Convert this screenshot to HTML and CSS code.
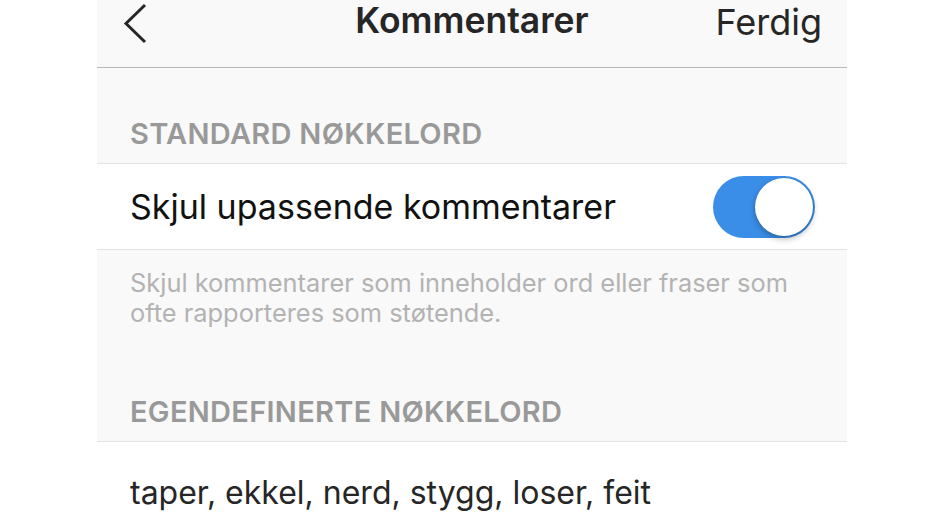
FILE: index.html
```html
<!DOCTYPE html>
<html lang="no">
<head>
<meta charset="utf-8">
<link rel="stylesheet" href="styles.css">
</head>
<body>
<div class="screen">
  <header class="nav">
    <span class="back" aria-label="Tilbake">
      <svg width="28" height="44" viewBox="0 0 28 44"><path d="M24 2 L5 20.5 L24 39" fill="none" stroke="#262626" stroke-width="3" stroke-linecap="butt" stroke-linejoin="miter"/></svg>
    </span>
    <h1 class="title">Kommentarer</h1>
    <span class="done">Ferdig</span>
  </header>
  <div class="section-head">STANDARD NØKKELORD</div>
  <div class="row">
    <span class="row-label">Skjul upassende kommentarer</span>
    <span class="toggle"><span class="knob"></span></span>
  </div>
  <p class="desc">Skjul kommentarer som inneholder ord eller fraser som ofte rapporteres som støtende.</p>
  <div class="section-head">EGENDEFINERTE NØKKELORD</div>
  <div class="row keywords">
    <span class="row-label">taper, ekkel, nerd, stygg, loser, feit</span>
  </div>
</div>
</body>
</html>
```

FILE: styles.css
```css
html, body {
  margin: 0;
  padding: 0;
  background: #ffffff;
  height: 100%;
  overflow: hidden;
}
body {
  font-family: Inter, "Noto Sans", sans-serif;
}
.screen {
  width: 750px;
  margin-left: 97px;
  background: #f9f9f9;
  min-height: 523px;
}
.nav {
  height: 67px;
  border-bottom: 1px solid #b8b8b8;
  display: grid;
  grid-template-columns: 1fr auto 1fr;
  align-items: start;
}
.back {
  justify-self: start;
  margin-left: 24px;
  margin-top: 3px;
  display: flex;
}
.title {
  margin: 0;
  font-size: 35.5px;
  font-weight: 600;
  color: #262626;
  line-height: 42px;
}
.done {
  justify-self: end;
  margin-right: 25px;
  font-size: 36px;
  color: #262626;
  line-height: 44px;
}
.section-head {
  padding: 0 33px 12px;
  font-size: 29px;
  font-weight: 600;
  color: #999999;
  letter-spacing: 0.3px;
  height: 95px;
  box-sizing: border-box;
  display: flex;
  align-items: flex-end;
}
.row {
  background: #ffffff;
  border-top: 1px solid #e3e3e3;
  border-bottom: 1px solid #e3e3e3;
  height: 85px;
  display: flex;
  align-items: center;
  justify-content: space-between;
  padding: 0 32px 0 33px;
}
.row-label {
  font-size: 34px;
  color: #111111;
}
.keywords {
  border-bottom: none;
  height: 100px;
}
.keywords .row-label {
  font-size: 32px;
  color: #262626;
}
.toggle {
  width: 102px;
  height: 62px;
  border-radius: 31px;
  background: #3a8ee8;
  display: flex;
  align-items: center;
  justify-content: flex-end;
  padding-right: 2px;
  box-sizing: border-box;
}
.knob {
  width: 58px;
  height: 58px;
  border-radius: 50%;
  background: #ffffff;
  box-shadow: 0 3px 6px rgba(0,0,0,0.28), 0 0 0 0.5px rgba(0,0,0,0.1);
}
.desc {
  margin: 0;
  padding: 18px 33px 0;
  height: 96px;
  box-sizing: border-box;
  font-size: 25.4px;
  line-height: 30px;
  color: #b3b3b3;
}
```
